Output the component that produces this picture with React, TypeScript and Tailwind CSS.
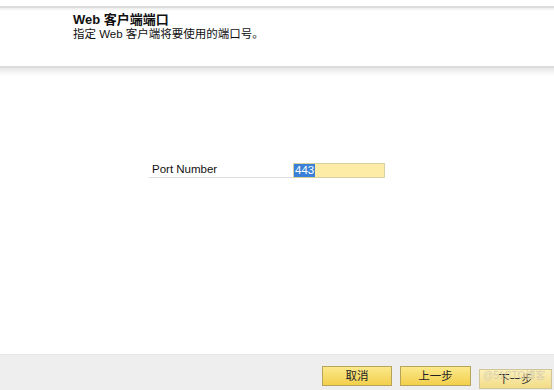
export default function App() {
  const font = { fontFamily: '"Liberation Sans", "Noto Sans CJK SC", sans-serif' };
  return (
    <div className="w-[554px] h-[390px] bg-white flex flex-col overflow-hidden text-[#111]" style={font}>
      <div className="h-[6px] bg-white" />
      <div className="h-[2px] bg-[#dcdcdc]" />
      <div className="h-[3px] bg-gradient-to-b from-[#ececec] to-white" />
      <div className="h-[55px] pl-[73px] flex flex-col">
        <div className="text-[13px] font-bold leading-[15px] mt-[1px]">Web 客户端端口</div>
        <div className="text-[11.5px] leading-[15px]">指定 Web 客户端将要使用的端口号。</div>
      </div>
      <div className="h-[2px] bg-[#dcdcdc]" />
      <div className="h-[8px] bg-gradient-to-b from-[#e8e8e8] to-white" />
      <div className="flex-1 flex flex-col">
        <div className="h-[86px]" />
        <div className="flex items-end ml-[149px]">
          <div className="w-[144px] border-b border-[#dddddd] pl-[3px] text-[11.5px] leading-[15px]">Port Number</div>
          <div className="w-[92px] h-[15px] bg-[#fdeca6] border border-[#d8d0a0] flex items-center">
            <span className="bg-[#3a7fd8] text-white text-[11.5px] leading-[13px] px-[1px]">443</span>
          </div>
        </div>
      </div>
      <div className="h-[36px] bg-[#eeeeee] border-t border-[#e6e6e6] flex items-start pt-[11px] pl-[322px] gap-[8px]">
        <button className="w-[70px] h-[20px] border border-[#b8a35a] bg-gradient-to-b from-[#fbe98a] to-[#f3cf4a] text-[11.5px] leading-[18px] text-[#222]">取消</button>
        <button className="w-[71px] h-[20px] border border-[#b8a35a] bg-gradient-to-b from-[#fbe98a] to-[#f3cf4a] text-[11.5px] leading-[18px] text-[#222]">上一步</button>
        <div className="relative shrink-0">
          <button className="w-[73px] h-[20px] border border-[#cfc49a] bg-gradient-to-b from-[#fbf0b8] to-[#f3dc88] text-[11.5px] leading-[18px] text-[#333] whitespace-nowrap">下一步</button>
          <span className="absolute left-[4px] top-[3px] text-[10px] leading-[14px] text-[#d8cfae] whitespace-nowrap pointer-events-none">@51CTO博客</span>
        </div>
      </div>
    </div>
  );
}
